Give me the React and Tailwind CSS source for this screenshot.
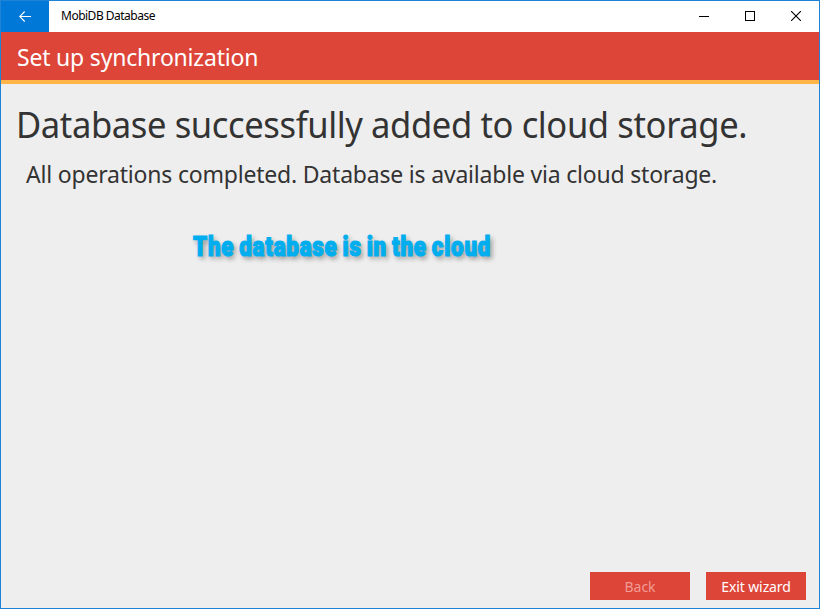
function TitleBar() {
  return (
    <div className="flex h-[31px] shrink-0 items-stretch bg-white">
      <button aria-label="Go back" className="flex w-12 items-center justify-center bg-[#0078d7]">
        <svg className="-mt-px" width="12" height="11" viewBox="0 0 12 11" fill="none" stroke="white" strokeWidth="1.1">
          <path d="M12 5.5H.7M5.7.5l-5 5 5 5" />
        </svg>
      </button>
      <span className="ml-3 flex-1 text-[12px] leading-[30px] tracking-[-0.5px] text-black">MobiDB Database</span>
      <div className="flex">
        <button aria-label="Minimize" className="flex w-[46px] items-center justify-center">
          <span className="-mt-px h-px w-[10px] bg-black" />
        </button>
        <button aria-label="Maximize" className="flex w-[46px] items-center justify-center">
          <span className="-mt-px size-[10px] border border-black" />
        </button>
        <button aria-label="Close" className="flex w-[46px] items-center justify-center">
          <svg className="-mt-px" width="10" height="10" viewBox="0 0 10 10" stroke="black" strokeWidth="1.1">
            <path d="M0 0l10 10M10 0L0 10" />
          </svg>
        </button>
      </div>
    </div>
  );
}

export default function App() {
  return (
    <div className="flex h-[609px] w-[820px] flex-col overflow-hidden border border-[#1f83d6] bg-[#eeeeee] font-['Noto_Sans','Open_Sans',sans-serif] whitespace-nowrap">
      <TitleBar />
      <header className="h-[52px] shrink-0 border-b-4 border-[#ffb547] bg-[#dd4539] pl-4 text-[23px] leading-[51px] tracking-[-0.2px] text-white">
        Set up synchronization
      </header>
      <main className="flex flex-1 flex-col items-start">
        <h1 className="mt-[16px] ml-[15px] origin-left scale-x-[0.96] text-[36px] leading-[50px] tracking-[-0.4px] text-[#333333]">
          Database successfully added to cloud storage.
        </h1>
        <p className="mt-[8px] ml-[25px] text-[23px] leading-[32px] tracking-[-0.2px] text-[#333333]">
          All operations completed. Database is available via cloud storage.
        </p>
        <p className="mt-[41px] ml-[192px] origin-left scale-x-[0.83] font-['Roboto',sans-serif] text-[27px] leading-[32px] font-black tracking-[0.9px] [word-spacing:-1.6px] text-[#00aeef] [-webkit-text-stroke:1.2px_#00aeef] [text-shadow:3px_3px_6px_rgba(0,0,0,0.4)]">
          The database is in the cloud
        </p>
      </main>
      <footer className="mr-[13px] mb-2 flex justify-end gap-4 text-[14px] leading-[30px] text-white">
        <button disabled className="h-7 w-[100px] bg-[#dd4539] text-[#f09b94]">Back</button>
        <button className="h-7 w-[100px] bg-[#dd4539] tracking-[-0.1px]">Exit wizard</button>
      </footer>
    </div>
  );
}
